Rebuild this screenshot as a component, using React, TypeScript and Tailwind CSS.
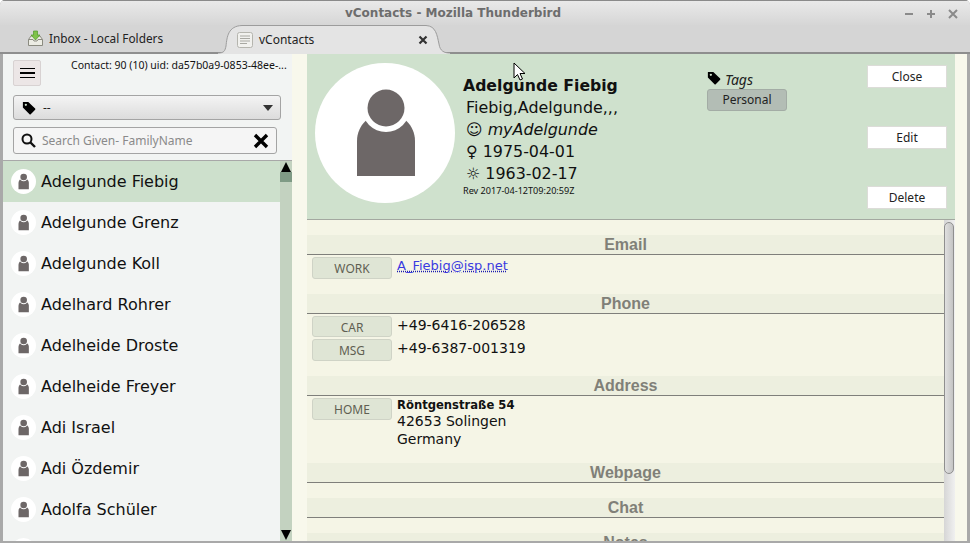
import React from "react";

const dejavu = "font-['DejaVu_Sans',sans-serif]";
const noto = "font-['Noto_Sans',sans-serif]";

function Person({ size }: { size: number }) {
  return (
    <svg width={size} height={size} viewBox="0 0 140 140" className="shrink-0">
      <circle cx="70" cy="70" r="70" fill="#ffffff" />
      <path d="M42 113V78C42 62 55 50 71 50C87 50 100 62 100 78V113Z" fill="#6d6767" />
      <circle cx="71" cy="45" r="24" fill="#ffffff" />
      <circle cx="71" cy="45" r="18.5" fill="#6d6767" />
    </svg>
  );
}

function TagIcon({ className }: { className?: string }) {
  return (
    <svg viewBox="0 0 16 16" className={className}>
      <path d="M1 1.5C1 1.2 1.2 1 1.5 1H7.2L15 8.6C15.4 9 15.4 9.6 15 10L10 15C9.6 15.4 9 15.4 8.6 15L1 7.4Z" fill="#000" />
      <circle cx="4.4" cy="4.4" r="1.3" fill="#cfe1cd" />
    </svg>
  );
}

const contacts = [
  "Adelgunde Fiebig",
  "Adelgunde Grenz",
  "Adelgunde Koll",
  "Adelhard Rohrer",
  "Adelheide Droste",
  "Adelheide Freyer",
  "Adi Israel",
  "Adi Özdemir",
  "Adolfa Schüler",
];

function Label({ children, className = "h-[22px]" }: { children: React.ReactNode; className?: string }) {
  return (
    <div className={`ml-[5px] w-[80px] shrink-0 flex items-center justify-center pt-[2px] rounded-[3px] border border-[#cfd3c6] bg-[#dfe5d5] text-[12px] text-[#5f5f52] ${noto} ${className}`}>
      {children}
    </div>
  );
}

function Section({ title, children }: { title: string; children?: React.ReactNode }) {
  return (
    <section className="pb-[15px]">
      <div className="h-[20px] bg-[#edefdf] border-b border-[#7f7f7b] text-center font-['Liberation_Sans',sans-serif] font-bold text-[16px] leading-[19px] text-[#808078]">
        {title}
      </div>
      {children}
    </section>
  );
}

function HeaderButton({ children, className = "" }: { children: React.ReactNode; className?: string }) {
  return (
    <button className={`block h-[23px] w-[80px] bg-white border border-[#dcdcd8] text-[12px] leading-[20px] text-[#222] ${noto} ${className}`}>
      {children}
    </button>
  );
}

export default function App() {
  return (
    <div className="relative w-[970px] h-[543px] overflow-hidden flex flex-col bg-[#a9a9a9] rounded-t-[5px]">
      {/* Title bar */}
      <div className="h-[25px] shrink-0 flex items-center justify-center pr-[64px] relative bg-gradient-to-b from-[#e9e9e9] to-[#d6d6d6] border-t border-[#8a8a8a]">
        <span className={`${dejavu} font-bold text-[12px] text-[#6d6d6d]`}>vContacts - Mozilla Thunderbird</span>
        <div className="absolute right-[10px] top-[6px] flex gap-[8px] text-[#8a8a8a]">
          <svg width="14" height="14" viewBox="0 0 14 14"><path d="M3 7H11" stroke="currentColor" strokeWidth="2" /></svg>
          <svg width="14" height="14" viewBox="0 0 14 14"><path d="M3 7H11M7 3V11" stroke="currentColor" strokeWidth="2" /></svg>
          <svg width="14" height="14" viewBox="0 0 14 14"><path d="M3 3L11 11M11 3L3 11" stroke="currentColor" strokeWidth="2" /></svg>
        </div>
      </div>

      {/* Tab bar */}
      <div className="h-[29px] shrink-0 flex items-stretch bg-[#d5d5d5] border-b-[2px] border-[#8e8e8e]">
        <div className={`w-[218px] shrink-0 flex items-center pl-[27px] gap-[5px] text-[11.8px] text-[#222] ${noto}`}>
          <svg width="17" height="17" viewBox="0 0 17 17">
            <path d="M1.5 9.5L4 6H13L15.5 9.5V15.5H1.5Z" fill="#ecece4" stroke="#8b8b80" />
            <path d="M1.5 9.5H6L7 11H10L11 9.5H15.5" fill="none" stroke="#8b8b80" />
            <path d="M6.5 1H10.5V5H13L8.5 10L4 5H6.5Z" fill="#7fc24a" stroke="#4f9a2a" strokeWidth="0.7" />
          </svg>
          <span>Inbox - Local Folders</span>
        </div>
        <div className={`relative w-[232px] -mb-[2px] shrink-0 flex items-center pl-[19px] text-[12px] text-[#222] ${noto}`}>
          <svg className="absolute inset-0" width="232" height="29" viewBox="0 0 232 29">
            <path d="M0 28C6 28 7 26 8 21C9 12 10 1 24 0.5H208C218 1 219 10 221 19C222 26 226 28 232 28V29H0Z" fill="#e4e4e4" />
            <path d="M0 28C6 28 7 26 8 21C9 12 10 1 24 0.5H208C218 1 219 10 221 19C222 26 226 28 232 28" fill="none" stroke="#9c9c9c" />
          </svg>
          <svg className="relative" width="16" height="16" viewBox="0 0 16 16">
            <rect x="0.5" y="0.5" width="15" height="15" rx="2" fill="#f1f1ee" stroke="#b5b5ae" />
            <path d="M3 4H13M3 6.5H13M3 9H13M3 11.5H10" stroke="#a8a8a2" />
          </svg>
          <span className="relative ml-[6px] flex-1">vContacts</span>
          <svg className="relative mr-[22px]" width="10" height="10" viewBox="0 0 10 10">
            <path d="M1.5 1.5L8.5 8.5M8.5 1.5L1.5 8.5" stroke="#333" strokeWidth="2.2" />
          </svg>
        </div>
      </div>

      {/* Main */}
      <div className="flex-1 min-h-0 mx-[3px] mb-[2px] flex bg-[#f8f8ec]">
        {/* Left column */}
        <div className="w-[289px] shrink-0 flex flex-col bg-[#f2f4f3]">
          <div className="h-[107px] shrink-0 border-b border-[#a8a8a8] px-[10px] pt-[6px]">
            <div className="flex h-[26px]">
              <button className="w-[28px] h-[26px] shrink-0 flex flex-col items-center justify-center gap-[3px] rounded-[2px] border border-[#d8d2d2] bg-[#ece6e6]">
                <span className="w-[15px] h-[1.5px] bg-black" />
                <span className="w-[15px] h-[1.5px] bg-black" />
                <span className="w-[15px] h-[1.5px] bg-black" />
              </button>
              <div className={`ml-[30px] text-[10.5px] leading-[10px] whitespace-nowrap text-[#111] ${noto}`}>
                Contact: 90 (10) uid: da57b0a9-0853-48ee-...
              </div>
            </div>
            <div className="mt-[9px] h-[25px] w-[268px] flex items-center pl-[8px] pr-[7px] rounded-[3px] border border-[#a4a4a4] bg-gradient-to-b from-[#f4f4f4] to-[#dcdcdc]">
              <TagIcon className="w-[14px] h-[14px]" />
              <span className={`ml-[7px] flex-1 text-[12px] text-[#222] ${noto}`}>--</span>
              <svg width="10" height="6" viewBox="0 0 10 6"><path d="M0 0H10L5 6Z" fill="#333" /></svg>
            </div>
            <div className="mt-[7px] h-[27px] w-[264px] flex items-center pl-[7px] pr-[7px] rounded-[3px] border border-[#a4a4a4] bg-[#f5f5f5]">
              <svg width="15" height="15" viewBox="0 0 15 15">
                <circle cx="6" cy="6" r="4.5" fill="none" stroke="#111" strokeWidth="2" />
                <path d="M9.5 9.5L14 14" stroke="#111" strokeWidth="2.4" />
              </svg>
              <span className={`ml-[6px] flex-1 text-[12px] text-[#8a8a8a] ${noto}`}>Search Given- FamilyName</span>
              <svg width="16" height="16" viewBox="0 0 16 16">
                <path d="M2 2L14 14M14 2L2 14" stroke="#000" strokeWidth="3.4" />
              </svg>
            </div>
          </div>
          <div className="flex-1 min-h-0 flex">
            <ul className="flex-1 min-w-0 overflow-hidden">
              {contacts.map((c, i) => (
                <li key={c} className={`h-[41px] flex items-center pl-[8px] ${i === 0 ? "bg-[#cde0cc]" : ""}`}>
                  <Person size={25} />
                  <span className={`ml-[5px] text-[16px] text-[#111] whitespace-nowrap ${dejavu}`}>{c}</span>
                </li>
              ))}
              <li className="h-[41px] flex items-start pl-[8px] pt-[8px]">
                <Person size={25} />
              </li>
            </ul>
            <div className="w-[12px] shrink-0 flex flex-col bg-[#c3d2c0]">
              <svg width="12" height="11" viewBox="0 0 12 11"><path d="M1 11H11L6 1Z" fill="#000" /></svg>
              <div className="h-[10px] bg-[#7f9a85]" />
              <div className="flex-1" />
              <svg width="12" height="11" viewBox="0 0 12 11"><path d="M1 0H11L6 10Z" fill="#000" /></svg>
            </div>
          </div>
        </div>

        {/* Right column */}
        <div className="w-[648px] ml-[15px] shrink-0 flex flex-col min-h-0">
          <div className="h-[166px] shrink-0 flex bg-[#cfe1cd] border-b border-[#a3a8a0] text-[#111]">
            <div className="ml-[8px] mt-[9px]"><Person size={140} /></div>
            <div className={`ml-[8px] pt-[21px] w-[244px] shrink-0 text-[15.9px] leading-[22px] ${dejavu}`}>
              <div className="font-bold text-[15.7px]">Adelgunde Fiebig</div>
              <div className="pl-[3px]">Fiebig,Adelgunde,,,</div>
              <div className="pl-[3px]"><span>☺</span> <span className="italic">myAdelgunde</span></div>
              <div className="pl-[3px]"><span>♀</span> 1975-04-01</div>
              <div className="pl-[3px]"><span>☼</span> 1963-02-17</div>
              <div className={`text-[9.1px] leading-[12px] ${noto}`}>Rev 2017-04-12T09:20:59Z</div>
            </div>
            <div className="pt-[16px] w-[160px] shrink-0">
              <div className="flex items-center h-[19px]">
                <TagIcon className="w-[14px] h-[14px] -mt-[4px]" />
                <span className={`ml-[4px] text-[14px] italic text-[#222] ${noto}`}>Tags</span>
              </div>
              <div className={`w-[80px] h-[22px] flex items-center justify-center rounded-[3px] border border-[#a3aca5] bg-[#b3bdb5] text-[12px] text-[#222] ${noto}`}>
                Personal
              </div>
            </div>
            <div className="pt-[11px]">
              <HeaderButton>Close</HeaderButton>
              <HeaderButton className="mt-[38px]">Edit</HeaderButton>
              <HeaderButton className="mt-[37px]">Delete</HeaderButton>
            </div>
          </div>

          <div className="flex-1 min-h-0 flex bg-[#f5f5e6] overflow-hidden">
            <div className="flex-1 min-w-0 pt-[15px]">
              <Section title="Email">
                <div className="flex pt-[2px] h-[24px]">
                  <Label>WORK</Label>
                  <a className={`ml-[5px] text-[13px] leading-[18px] h-[18px] text-[#3a3ae0] underline decoration-dotted decoration-[#1a1ab0] ${dejavu}`}>A_Fiebig@isp.net</a>
                </div>
              </Section>
              <Section title="Phone">
                <div className={`flex flex-col text-[14px] text-[#111] ${dejavu}`}>
                  <div className="flex pt-[1px] h-[23px]">
                    <Label className="h-[21px] mt-[1px]">CAR</Label>
                    <span className="ml-[5px] leading-[20px]">+49-6416-206528</span>
                  </div>
                  <div className="flex pt-[1px] h-[24px]">
                    <Label className="h-[22px] mt-[1px]">MSG</Label>
                    <span className="ml-[5px] leading-[20px]">+49-6387-001319</span>
                  </div>
                </div>
              </Section>
              <Section title="Address">
                <div className="flex pt-[2px] h-[52px]">
                  <Label>HOME</Label>
                  <div className={`ml-[5px] text-[14px] leading-[18px] text-[#111] ${dejavu}`}>
                    <div className="font-bold text-[11.6px] leading-[14px]">Röntgenstraße 54</div>
                    <div>42653 Solingen</div>
                    <div>Germany</div>
                  </div>
                </div>
              </Section>
              <Section title="Webpage" />
              <Section title="Chat" />
              <Section title="Notes" />
            </div>
            <div className="w-[11px] shrink-0 pt-[2px] bg-gradient-to-r from-[#d6d6d6] to-[#f0f0f0]">
              <div className="w-[10px] h-[252px] rounded-[5px] border border-[#8f8f8f] bg-gradient-to-r from-[#e0e0e0] to-[#c4c4c4]" />
            </div>
          </div>
        </div>
      </div>

      {/* Mouse cursor */}
      <svg className="absolute left-[513px] top-[62px]" width="14" height="20" viewBox="0 0 14 20">
        <path d="M1 1V16L4.5 12.5L7 18L9.5 17L7 11.5H12Z" fill="#fff" stroke="#000" strokeWidth="1" />
      </svg>
    </div>
  );
}
